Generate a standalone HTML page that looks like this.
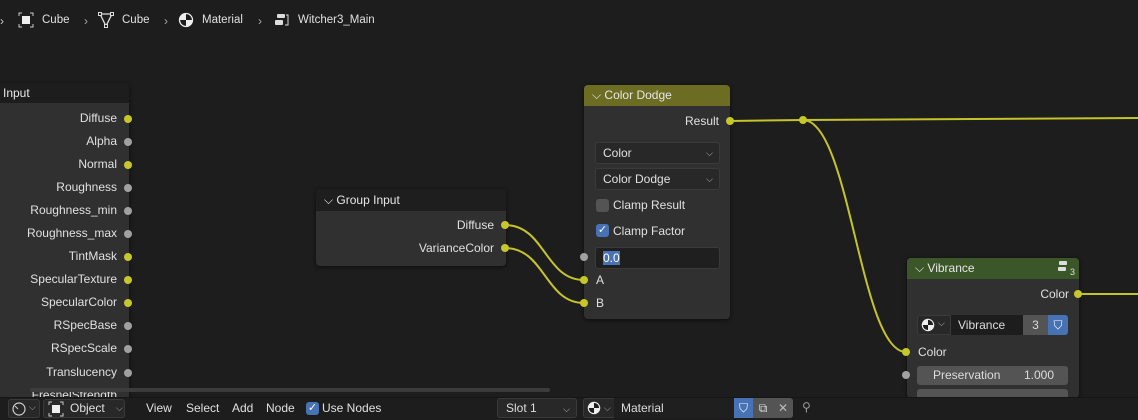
<!DOCTYPE html>
<html><head><meta charset="utf-8"><style>
*{box-sizing:border-box;margin:0;padding:0}
body{width:1138px;height:420px;overflow:hidden;background:#1d1d1d;font-family:"Liberation Sans","DejaVu Sans",sans-serif;font-size:12px;color:#dcdcdc;position:relative}
.a{position:absolute}
.node{position:absolute;background:#303030;border-radius:4px;box-shadow:0 1px 4px rgba(0,0,0,.6)}
.hdr{height:20px;border-radius:4px 4px 0 0;padding:0 0 0 8px;line-height:20px;font-size:12px;color:#e6e6e6}
.sk{position:absolute;width:8px;height:8px;border-radius:50%;background:#c7c729}
.sk.g{background:#a1a1a1}
.lbl{position:absolute;font-size:12px;color:#e0e0e0;white-space:nowrap}
.fld{position:absolute;background:#282828;border:1px solid #3a3a3a;border-radius:3px;height:22px;line-height:20px;padding-left:7px;font-size:12px;color:#e0e0e0}
.chev{position:absolute;right:6px;top:0;font-size:9px;color:#bbb}
</style></head><body>
<div class="a" style="left:0;top:14px;font-size:12px;color:#ccc">›</div>
<svg class="a" style="left:18px;top:12px" width="16" height="16" viewBox="0 0 16 16"><path d="M1 4V1h3M12 1h3v3M15 12v3h-3M4 15H1v-3" stroke="#ccc" fill="none"/><rect x="4" y="4" width="8" height="8" fill="#eee"/></svg>
<div class="lbl" style="left:42px;top:14px;font-size:11.5px">Cube</div>
<div class="lbl" style="left:84px;top:14px;color:#aaa">›</div>
<svg class="a" style="left:98px;top:12px" width="16" height="16" viewBox="0 0 16 16"><path d="M2 2h12L8 14z" stroke="#ddd" fill="none" stroke-width="1.3"/><rect x="0.5" y="0.5" width="3" height="3" fill="#1d1d1d" stroke="#ddd"/><rect x="12.5" y="0.5" width="3" height="3" fill="#1d1d1d" stroke="#ddd"/><rect x="6.5" y="12.5" width="3" height="3" fill="#1d1d1d" stroke="#ddd"/></svg>
<div class="lbl" style="left:122px;top:14px;font-size:11.5px">Cube</div>
<div class="lbl" style="left:164px;top:14px;color:#aaa">›</div>
<svg class="a" style="left:178px;top:12px" width="16" height="16" viewBox="0 0 16 16"><circle cx="8" cy="8" r="6.5" fill="#1d1d1d" stroke="#eee" stroke-width="1.3"/><path d="M8 1.5A6.5 6.5 0 0 0 1.5 8H8z M8 8h6.5A6.5 6.5 0 0 1 8 14.5z" fill="#eee"/></svg>
<div class="lbl" style="left:202px;top:14px;font-size:11.5px">Material</div>
<div class="lbl" style="left:258px;top:14px;color:#aaa">›</div>
<svg class="a" style="left:274px;top:12px" width="16" height="16" viewBox="0 0 16 16"><rect x="3" y="2" width="8" height="4" rx="1" fill="#ddd"/><rect x="1" y="8" width="8" height="5" rx="1" fill="#ddd"/><path d="M12 3h2v10h-3" stroke="#ddd" fill="none"/></svg>
<div class="lbl" style="left:298px;top:14px;font-size:11.5px">Witcher3_Main</div>

<svg class="a" style="left:0;top:0" width="1138" height="420">
<g stroke="#c4c42a" stroke-width="2" fill="none">
<path d="M505 225C545 225 545 280 584 280"/>
<path d="M505 248C545 248 545 303 584 303"/>
<path d="M730 121L803 120L1138 118"/>
<path d="M803 120C850 120 860 352 906 352"/>
<path d="M1078 294L1138 294"/>
</g>
<circle cx="803" cy="120" r="4" fill="#c7c729"/>
</svg>

<div class="node" style="left:-10px;top:83px;width:139px;height:320px">
<div class="hdr" style="background:#1d1d1d;padding-left:13px">Input</div>
</div>
<div class="lbl" style="right:1021px;top:111px">Diffuse</div><div class="sk" style="left:124px;top:115px"></div>
<div class="lbl" style="right:1021px;top:134px">Alpha</div><div class="sk g" style="left:124px;top:138px"></div>
<div class="lbl" style="right:1021px;top:157px">Normal</div><div class="sk" style="left:124px;top:161px"></div>
<div class="lbl" style="right:1021px;top:180px">Roughness</div><div class="sk g" style="left:124px;top:184px"></div>
<div class="lbl" style="right:1021px;top:203px">Roughness_min</div><div class="sk g" style="left:124px;top:207px"></div>
<div class="lbl" style="right:1021px;top:226px">Roughness_max</div><div class="sk g" style="left:124px;top:230px"></div>
<div class="lbl" style="right:1021px;top:249px">TintMask</div><div class="sk" style="left:124px;top:253px"></div>
<div class="lbl" style="right:1021px;top:272px">SpecularTexture</div><div class="sk" style="left:124px;top:276px"></div>
<div class="lbl" style="right:1021px;top:295px">SpecularColor</div><div class="sk" style="left:124px;top:299px"></div>
<div class="lbl" style="right:1021px;top:318px">RSpecBase</div><div class="sk g" style="left:124px;top:322px"></div>
<div class="lbl" style="right:1021px;top:341px">RSpecScale</div><div class="sk g" style="left:124px;top:345px"></div>
<div class="lbl" style="right:1021px;top:365px">Translucency</div><div class="sk g" style="left:124px;top:369px"></div>
<div class="lbl" style="right:1021px;top:388px">FresnelStrength</div>
<div class="a" style="left:30px;top:388px;width:520px;height:4px;background:#3c3c3c;border-radius:2px"></div>

<div class="node" style="left:316px;top:189px;width:190px;height:77px">
<div class="hdr" style="background:#1e1e1e;height:22px;line-height:22px">⌵ Group Input</div>
</div>
<div class="lbl" style="right:644px;top:218px">Diffuse</div><div class="sk" style="left:501px;top:221px"></div>
<div class="lbl" style="right:644px;top:241px">VarianceColor</div><div class="sk" style="left:501px;top:244px"></div>

<div class="node" style="left:584px;top:85px;width:146px;height:234px">
<div class="hdr" style="background:#6c6c23;height:21px">⌵ Color Dodge</div>
</div>
<div class="lbl" style="right:419px;top:114px">Result</div><div class="sk" style="left:726px;top:117px"></div>
<div class="fld" style="left:595px;top:142px;width:125px">Color<span class="chev">⌵</span></div>
<div class="fld" style="left:595px;top:168px;width:125px">Color Dodge<span class="chev">⌵</span></div>
<div class="a" style="left:596px;top:199px;width:13px;height:13px;background:#545454;border-radius:3px"></div>
<div class="lbl" style="left:613px;top:198px">Clamp Result</div>
<div class="a" style="left:596px;top:224px;width:13px;height:13px;background:#4772b3;border-radius:3px;color:#fff;font-size:11px;line-height:13px;text-align:center">✓</div>
<div class="lbl" style="left:613px;top:224px">Clamp Factor</div>
<div class="fld" style="left:595px;top:247px;width:125px;background:#1f1f1f;padding-left:7px"><span style="background:#4772b3;color:#fff">0.0</span></div>
<div class="sk g" style="left:580px;top:253px"></div>
<div class="lbl" style="left:596px;top:273px">A</div><div class="sk" style="left:580px;top:276px"></div>
<div class="lbl" style="left:596px;top:296px">B</div><div class="sk" style="left:580px;top:299px"></div>

<div class="node" style="left:907px;top:258px;width:172px;height:140px">
<div class="hdr" style="background:#3b5628;height:21px">⌵ Vibrance</div>
</div>
<svg class="a" style="left:1057px;top:260px" width="20" height="16" viewBox="0 0 20 16"><rect x="2" y="1" width="8" height="4" rx="1" fill="#ddd"/><rect x="1" y="7" width="8" height="4" rx="1" fill="#ddd"/><text x="13" y="15" font-size="9" fill="#ddd" font-family="Liberation Sans">3</text></svg>
<div class="lbl" style="right:69px;top:287px">Color</div><div class="sk" style="left:1074px;top:290px"></div>
<div class="a" style="left:917px;top:315px;width:34px;height:20px;background:#282828;border-radius:3px 0 0 3px;border:1px solid #3a3a3a"></div>
<svg class="a" style="left:921px;top:318px" width="14" height="14" viewBox="0 0 16 16"><circle cx="8" cy="8" r="6.5" fill="#1d1d1d" stroke="#eee" stroke-width="1.3"/><path d="M8 1.5A6.5 6.5 0 0 0 1.5 8H8z M8 8h6.5A6.5 6.5 0 0 1 8 14.5z" fill="#eee"/></svg>
<div class="lbl" style="left:938px;top:318px;font-size:9px;color:#bbb">⌵</div>
<div class="a" style="left:951px;top:315px;width:72px;height:20px;background:#1d1d1d;line-height:20px;padding-left:7px">Vibrance</div>
<div class="a" style="left:1023px;top:315px;width:25px;height:20px;background:#545454;line-height:20px;text-align:center">3</div>
<div class="a" style="left:1048px;top:315px;width:20px;height:20px;background:#4772b3;border-radius:0 3px 3px 0;color:#fff;text-align:center;line-height:20px;font-size:12px">⛉</div>
<div class="lbl" style="left:918px;top:345px">Color</div><div class="sk" style="left:902px;top:348px"></div>
<div class="a" style="left:917px;top:366px;width:151px;height:19px;background:#545454;border-radius:3px;line-height:19px"><span style="position:absolute;left:16px">Preservation</span><span style="position:absolute;right:14px">1.000</span></div>
<div class="sk g" style="left:902px;top:371px"></div>
<div class="a" style="left:917px;top:389px;width:151px;height:10px;background:#545454;border-radius:3px"></div>

<div class="a" style="left:0;top:397px;width:1138px;height:23px;background:#1d1d1d;border-top:1px solid #161616"></div>
<div class="a" style="left:8px;top:399px;width:32px;height:19px;border:1px solid #3a3a3a;border-radius:3px;background:#282828"></div>
<svg class="a" style="left:11px;top:401px" width="16" height="16"><circle cx="8" cy="8" r="6" fill="none" stroke="#ccc" stroke-width="1.2"/><path d="M4 5L7 8" stroke="#ccc"/></svg>
<div class="lbl" style="left:29px;top:402px;font-size:9px;color:#aaa">⌵</div>
<div class="a" style="left:43px;top:399px;width:82px;height:19px;border:1px solid #3a3a3a;border-radius:3px;background:#282828"></div>
<svg class="a" style="left:48px;top:401px" width="16" height="16" viewBox="0 0 16 16"><path d="M1 4V1h3M12 1h3v3M15 12v3h-3M4 15H1v-3" stroke="#ccc" fill="none"/><rect x="4" y="4" width="8" height="8" fill="#eee"/></svg>
<div class="lbl" style="left:70px;top:401px">Object</div>
<div class="lbl" style="left:116px;top:403px;font-size:9px;color:#aaa">⌵</div>
<div class="lbl" style="left:146px;top:401px">View</div>
<div class="lbl" style="left:186px;top:401px">Select</div>
<div class="lbl" style="left:232px;top:401px">Add</div>
<div class="lbl" style="left:266px;top:401px">Node</div>
<div class="a" style="left:306px;top:402px;width:13px;height:13px;background:#4772b3;border-radius:3px;color:#fff;font-size:11px;line-height:13px;text-align:center">✓</div>
<div class="lbl" style="left:322px;top:401px">Use Nodes</div>
<div class="a" style="left:497px;top:398px;width:80px;height:20px;border:1px solid #3a3a3a;border-radius:3px;background:#282828;line-height:18px;padding-left:8px">Slot 1<span class="chev" style="top:1px">⌵</span></div>
<div class="a" style="left:583px;top:398px;width:32px;height:20px;border:1px solid #3a3a3a;border-radius:3px 0 0 3px;background:#282828"></div>
<svg class="a" style="left:587px;top:401px" width="14" height="14" viewBox="0 0 16 16"><circle cx="8" cy="8" r="6.5" fill="#1d1d1d" stroke="#eee" stroke-width="1.3"/><path d="M8 1.5A6.5 6.5 0 0 0 1.5 8H8z M8 8h6.5A6.5 6.5 0 0 1 8 14.5z" fill="#eee"/></svg>
<div class="lbl" style="left:604px;top:403px;font-size:9px;color:#aaa">⌵</div>
<div class="a" style="left:614px;top:398px;width:120px;height:20px;background:#1f1f1f;line-height:20px;padding-left:7px">Material</div>
<div class="a" style="left:734px;top:398px;width:19px;height:20px;background:#4772b3;color:#fff;text-align:center;line-height:20px">⛉</div>
<div class="a" style="left:753px;top:398px;width:20px;height:20px;background:#545454;color:#ddd;text-align:center;line-height:20px">⧉</div>
<div class="a" style="left:773px;top:398px;width:20px;height:20px;background:#545454;border-radius:0 3px 3px 0;color:#bbb;text-align:center;line-height:20px">✕</div>
<div class="lbl" style="left:802px;top:400px;color:#999">⚲</div>
</body></html>
